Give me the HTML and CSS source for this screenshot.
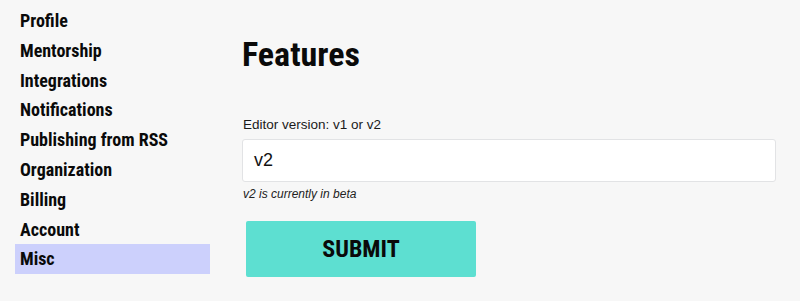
FILE: index.html
```html
<!DOCTYPE html>
<html>
<head>
<meta charset="utf-8">
<link rel="stylesheet" href="styles.css">
</head>
<body>
<div class="page">
  <nav class="sidebar">
    <a class="nav-item">Profile</a>
    <a class="nav-item">Mentorship</a>
    <a class="nav-item">Integrations</a>
    <a class="nav-item">Notifications</a>
    <a class="nav-item">Publishing from RSS</a>
    <a class="nav-item">Organization</a>
    <a class="nav-item">Billing</a>
    <a class="nav-item">Account</a>
    <a class="nav-item active">Misc</a>
  </nav>
  <main class="content">
    <h1 class="title">Features</h1>
    <label class="label">Editor version: v1 or v2</label>
    <div class="input">v2</div>
    <p class="hint">v2 is currently in beta</p>
    <button class="submit">SUBMIT</button>
  </main>
</div>
</body>
</html>
```
FILE: styles.css
```css
html, body {
  margin: 0;
  padding: 0;
  background: #f7f7f7;
}
.page {
  display: flex;
  width: 800px;
  height: 301px;
  overflow: hidden;
}
.sidebar {
  width: 195px;
  margin-left: 15px;
  padding-top: 6px;
  display: flex;
  flex-direction: column;
}
.nav-item {
  display: block;
  height: 29.8px;
  line-height: 30px;
  padding-left: 5px;
  font-family: "Roboto Condensed", "DejaVu Sans Condensed", sans-serif;
  font-weight: bold;
  font-size: 18px;
  color: #0a0a0a;
}
.nav-item.active {
  background: #ccd0fc;
}
.content {
  margin-left: 32px;
  width: 534px;
  display: flex;
  flex-direction: column;
  align-items: flex-start;
}
.title {
  margin: 34px 0 0 0;
  font-family: "Roboto Condensed", "DejaVu Sans Condensed", sans-serif;
  font-weight: bold;
  font-size: 34px;
  line-height: 40px;
  color: #0a0a0a;
}
.label {
  margin-top: 42px;
  margin-left: 1px;
  font-family: "Liberation Sans", sans-serif;
  font-size: 13.5px;
  line-height: 18px;
  color: #1a1a1a;
}
.input {
  box-sizing: border-box;
  margin-top: 5px;
  width: 534px;
  height: 43px;
  background: #fff;
  border: 1px solid #e2e3e5;
  border-radius: 3px;
  padding-left: 11px;
  font-family: "Liberation Sans", sans-serif;
  font-size: 18px;
  line-height: 41px;
  color: #111;
}
.hint {
  margin: 5px 0 0 1px;
  font-family: "Liberation Sans", sans-serif;
  font-style: italic;
  font-size: 12px;
  line-height: 15px;
  color: #222;
}
.submit {
  margin-top: 19px;
  margin-left: 4px;
  width: 230px;
  height: 56px;
  background: #5ddfd1;
  border: none;
  border-radius: 2px;
  font-family: "Roboto Condensed", "DejaVu Sans Condensed", sans-serif;
  font-weight: bold;
  font-size: 24px;
  color: #0a0a0a;
  padding: 0;
}
```
